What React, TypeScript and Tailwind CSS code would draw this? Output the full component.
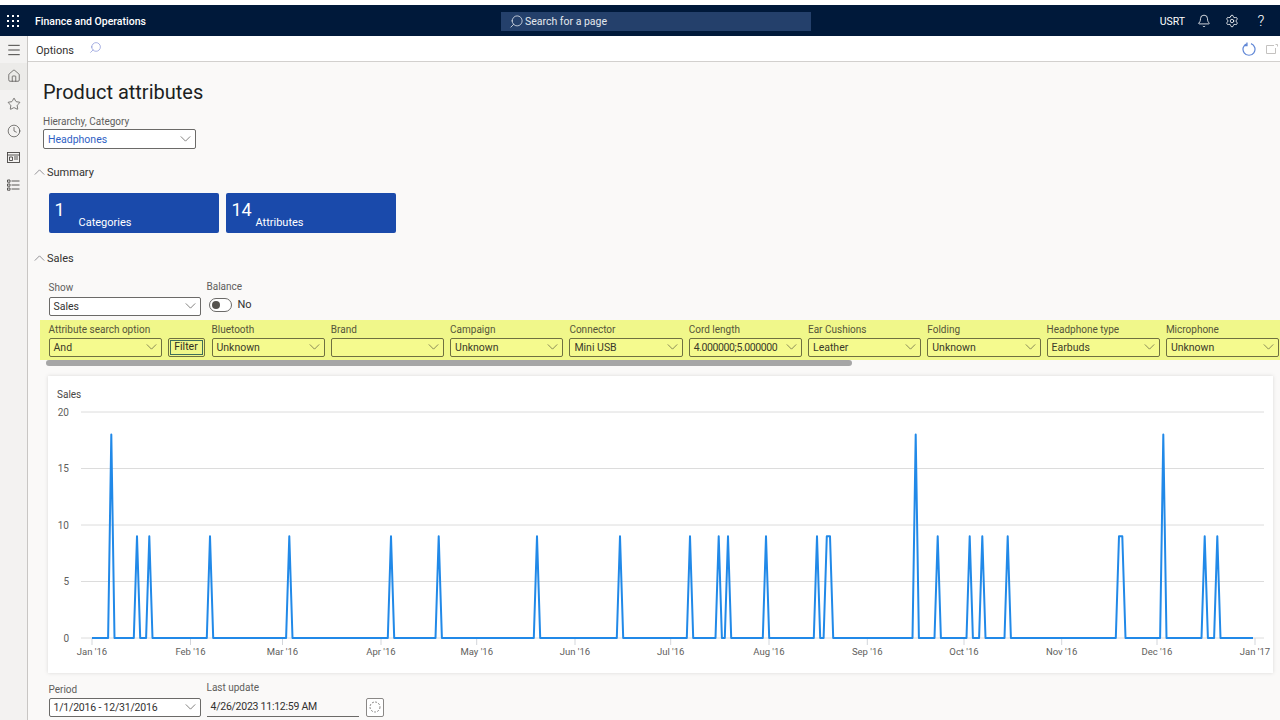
import { Bell, Clock, Home, Menu, Search, Settings, Star } from "lucide-react";

const peaks: [number, number, number][] = [
  [111.3, 111.3, 18], [137, 137, 9], [149.3, 149.3, 9], [210, 210, 9], [289.3, 289.3, 9],
  [391, 391, 9], [438.7, 438.7, 9], [537, 537, 9], [620, 620, 9], [690, 690, 9],
  [718.7, 718.7, 9], [728, 728, 9], [766, 766, 9], [817, 817, 9], [826.8, 830, 9],
  [915.7, 915.7, 18], [937.7, 937.7, 9], [969.7, 969.7, 9], [982.3, 982.3, 9],
  [1007.7, 1007.7, 9], [1119, 1122.3, 9], [1163.3, 1163.3, 18], [1204.7, 1204.7, 9], [1217.3, 1217.3, 9],
];

const months: [string, number][] = [
  ["Jan '16", 92], ["Feb '16", 190.5], ["Mar '16", 282.5], ["Apr '16", 381], ["May '16", 476.7],
  ["Jun '16", 575], ["Jul '16", 670.7], ["Aug '16", 769], ["Sep '16", 867.3], ["Oct '16", 964],
  ["Nov '16", 1061.7], ["Dec '16", 1157], ["Jan '17", 1255],
];

const filters: [string, string][] = [
  ["Bluetooth", "Unknown"], ["Brand", ""], ["Campaign", "Unknown"], ["Connector", "Mini USB"],
  ["Cord length", "4.000000;5.000000"], ["Ear Cushions", "Leather"], ["Folding", "Unknown"],
  ["Headphone type", "Earbuds"], ["Microphone", "Unknown"],
];

const yOf = (v: number) => 638 - v * 11.3;

const linePoints = () => {
  const pts: string[] = ["92,638"];
  peaks.forEach(([a, b, v]) => {
    pts.push(`${a - 3.2},638`, `${a},${yOf(v)}`);
    if (b !== a) pts.push(`${b},${yOf(v)}`);
    pts.push(`${b + 3.2},638`);
  });
  pts.push("1253,638");
  return pts.join(" ");
};

const Chevron = ({ up, className }: { up?: boolean; className: string }) => (
  <svg viewBox="0 0 12 7" className={`h-[6px] w-[11px] shrink-0 ${className}`} fill="none" stroke="currentColor" strokeWidth="0.9">
    <path d={up ? "M.5 6.5 6 1l5.5 5.5" : "M.5.5 6 6 11.5.5"} />
  </svg>
);

const SelectBox = ({ value, yellow, blue, tight, className }: { value: string; yellow?: boolean; blue?: boolean; tight?: string; className: string }) => {
  const surface = yellow ? "border-[#6f7040] bg-[#f5fa8e]" : "border-[#6b6a68] bg-white";
  const ink = blue ? "text-[#2f5fc4]" : yellow ? "text-[#3b3a2a]" : "text-[#323130]";
  return (
    <div className={`flex h-[19.5px] items-center justify-between rounded-[2px] border pl-[4px] pr-[4px] text-[10.5px] leading-none ${surface} ${ink} ${className}`}>
      <span className={`mt-[2px] whitespace-nowrap ${tight ?? ""}`}>{value}</span>
      <Chevron className={yellow ? "text-[#6a6b48]" : "text-[#605e5c]"} />
    </div>
  );
};

const Section = ({ title, className }: { title: string; className: string }) => (
  <div className={`flex h-[14px] items-center text-[11px] text-[#323130] ${className}`}>
    <Chevron up className="ml-[6px] mr-[2px] -mt-[1px] text-[#77757a]" />
    <span className="mt-[2px]">{title}</span>
  </div>
);

const Tile = ({ count, label }: { count: string; label: string }) => (
  <div className="flex h-[40px] w-[170.5px] rounded-[2px] bg-[#1a4aab] pl-[6px] text-white">
    <span className="mt-[5px] w-[24px] text-[18px] leading-[24px]">{count}</span>
    <span className="mt-[23px] text-[11px] leading-[14px]">{label}</span>
  </div>
);

const NavButton = ({ children, active }: { children: React.ReactNode; active?: boolean }) => (
  <div className={`flex h-[27px] items-center justify-center text-[#484644] ${active ? "bg-[#ecebe9]" : ""}`}>{children}</div>
);

const SalesChart = () => (
  <svg viewBox="48 376 1225 297" className="h-[297px] w-[1225px]">
    <text x="57" y="398" fontSize="10" fill="#484644">Sales</text>
    {[0, 5, 10, 15, 20].map((v) => (
      <g key={v}>
        <line x1="81" x2="1264" y1={yOf(v)} y2={yOf(v)} stroke="#dcdcdc" strokeWidth="1" />
        <text x="69" y={yOf(v) + 3.5} fontSize="10" fill="#605e5c" textAnchor="end">{v}</text>
      </g>
    ))}
    {months.map(([label, x]) => (
      <g key={label}>
        <line x1={x} x2={x} y1="638" y2="645" stroke="#d3d6db" />
        <text x={x} y="655" fontSize="9.5" fill="#605e5c" textAnchor="middle">{label}</text>
      </g>
    ))}
    <polyline points={linePoints()} fill="none" stroke="#2189e8" strokeWidth="2" strokeLinejoin="round" />
  </svg>
);

export default function App() {
  return (
    <div className="flex h-[720px] w-[1280px] flex-col overflow-hidden bg-[#faf9f8] font-['Roboto',sans-serif]">
      <div className="h-[5px] shrink-0 bg-white" />

      {/* Top bar */}
      <header className="flex h-[31px] shrink-0 items-center bg-[#00193a] text-white">
        <svg viewBox="0 0 12 12" className="ml-[7px] h-[12px] w-[12px]" fill="#fff">
          {[1, 6, 11].map((y) => [1, 6, 11].map((x) => <rect key={`${x}${y}`} x={x - 1} y={y - 1} width="2" height="2" />))}
        </svg>
        <span className="ml-[16px] mt-[3px] w-[112px] whitespace-nowrap text-[10.5px] font-medium">Finance and Operations</span>
        <div className="ml-[354px] mt-[1px] flex h-[19px] w-[310px] items-center bg-[#24406b] pl-[8px] text-[10.5px] text-[#e4e8ee]">
          <Search className="mr-[1px] h-[15px] w-[15px] -scale-x-100" strokeWidth={1.25} />
          <span className="mt-[2px]">Search for a page</span>
        </div>
        <span className="ml-auto mr-[1px] mt-[3px] text-[10.5px]">USRT</span>
        <span className="ml-[4px] flex w-[28px] justify-center"><Bell className="h-[14px] w-[14px]" strokeWidth={1.4} /></span>
        <span className="flex w-[28px] justify-center"><Settings className="h-[14px] w-[14px]" strokeWidth={1.4} /></span>
        <span className="mr-[4px] mt-[2px] w-[30px] text-center text-[15px] font-light leading-none">?</span>
      </header>

      <div className="flex min-h-0 flex-1">
        {/* Side nav */}
        <nav className="w-[28px] shrink-0 border-r border-[#c8c6c4] bg-[#f3f2f1]">
          <NavButton><Menu className="mt-[1px] h-[16px] w-[16px]" strokeWidth={1.5} /></NavButton>
          <NavButton active><Home className="-mt-[1px] h-[14px] w-[14px]" strokeWidth={1.2} /></NavButton>
          <NavButton><Star className="h-[14px] w-[14px]" strokeWidth={1.2} /></NavButton>
          <NavButton><Clock className="h-[14px] w-[14px]" strokeWidth={1.2} /></NavButton>
          <NavButton>
            <svg viewBox="0 0 13 11" className="h-[11px] w-[13px]" fill="none" stroke="currentColor" strokeWidth="0.9">
              <rect x="0.5" y="0.5" width="12" height="10" />
              <path d="M0.5 3h12M2.5 5h3v3.5h-3zM7 5h4M7 7h4" />
            </svg>
          </NavButton>
          <NavButton>
            <svg viewBox="0 0 13 12" className="h-[12px] w-[13px]" fill="none" stroke="currentColor" strokeWidth="0.9">
              <path d="M0.5 1h2.5v2.2H0.5zM0.5 5h2.5v2.2H0.5zM0.5 9h2.5v2.2H0.5zM4.5 2h8M4.5 6h8M4.5 10h8" />
            </svg>
          </NavButton>
        </nav>

        <main className="min-w-0 flex-1">
          {/* Command bar */}
          <div className="flex h-[26px] items-center border-b border-[#d2d0ce] bg-white pl-[8px] text-[#323130]">
            <span className="mt-[6px] text-[11px]">Options</span>
            <Search className="ml-[15px] -mt-[2px] h-[13px] w-[13px] -scale-x-100 text-[#6f7fd0]" strokeWidth={1.1} />
            <svg viewBox="0 0 14 14" className="ml-auto h-[14px] w-[14px]" fill="none" stroke="#5f86d6" strokeWidth="1.2">
              <path d="M5 1.6a6 6 0 1 0 4 0M5 .6v3h-3" />
            </svg>
            <svg viewBox="0 0 12 10" className="ml-[10px] mr-[2px] h-[10px] w-[12px]" fill="none" stroke="#c4c2c0" strokeWidth="1">
              <path d="M8 1.5H.5v8h9V4M9.5.5h2v2" />
            </svg>
          </div>

          <h1 className="ml-[15px] mt-[16px] text-[20px] font-normal leading-[28px] text-[#201f1e]">Product attributes</h1>
          <div className="ml-[15px] mt-[9px] text-[10px] leading-[14px] text-[#605e5c]">Hierarchy, Category</div>
          <SelectBox value="Headphones" blue className="ml-[15px] w-[153px]" />

          <Section title="Summary" className="mt-[17px]" />
          <div className="ml-[20.5px] mt-[13px] flex gap-[6.5px]">
            <Tile count="1" label="Categories" />
            <Tile count="14" label="Attributes" />
          </div>

          <Section title="Sales" className="mt-[19px]" />

          {/* Show + balance */}
          <div className="ml-[20.5px] mt-[14px] flex h-[37px]">
            <div className="w-[152px]">
              <div className="h-[17px] text-[10px] leading-[16px] text-[#605e5c]">Show</div>
              <SelectBox value="Sales" className="w-[152px]" />
            </div>
            <div className="ml-[6px] -mt-[1px]">
              <div className="h-[17px] text-[10px] leading-[16px] text-[#605e5c]">Balance</div>
              <div className="ml-[2px] mt-[1px] flex items-center">
                <div className="flex h-[14px] w-[23px] items-center rounded-full border border-[#6b6a68] bg-white pl-[2px]">
                  <div className="h-[8px] w-[8px] rounded-full bg-[#55534f]" />
                </div>
                <span className="ml-[6px] text-[11px] text-[#323130]">No</span>
              </div>
            </div>
          </div>

          {/* Filter band */}
          <div className="ml-[12px] mt-[3px] flex h-[40px] gap-[6px] bg-[#f0f78a] pl-[8.5px] pt-[2px]">
            <div className="w-[113.3px] shrink-0">
              <div className="h-[16px] whitespace-nowrap text-[10px] leading-[16px] text-[#55553a]">Attribute search option</div>
              <SelectBox value="And" yellow className="w-[113.3px]" />
            </div>
            <div className="ml-[-0.3px] mr-[1px] mt-[16px] flex h-[19.5px] w-[37px] shrink-0 items-center justify-center rounded-[2px] border border-[#6f7040] p-[1px]">
              <div className="flex h-full w-full items-center justify-center border border-[#3f6f5a] text-[10.5px] text-[#2f2f20]">Filter</div>
            </div>
            {filters.map(([label, value]) => (
              <div key={label} className="w-[113.3px] shrink-0">
                <div className="h-[16px] whitespace-nowrap text-[10px] leading-[16px] text-[#55553a]">{label}</div>
                <SelectBox value={value} yellow tight={label === "Cord length" ? "tracking-[-0.4px]" : ""} className="w-[113.3px]" />
              </div>
            ))}
          </div>

          {/* Scroll thumb */}
          <div className="ml-[18px] h-[6px] w-[806px] rounded-full bg-[#a6a6a6]" />

          <div className="ml-[20px] mt-[10px] w-[1225px] bg-white shadow-[0_0_4px_rgba(0,0,0,0.13)]">
            <SalesChart />
          </div>

          {/* Period row */}
          <div className="ml-[20.5px] mt-[7px] flex">
            <div className="w-[152px] pt-[2px]">
              <div className="h-[16px] text-[10px] leading-[16px] text-[#605e5c]">Period</div>
              <SelectBox value="1/1/2016 - 12/31/2016" tight="tracking-[-0.2px]" className="w-[152px]" />
            </div>
            <div className="ml-[6px] w-[152px]">
              <div className="h-[18px] text-[10px] leading-[16px] text-[#605e5c]">Last update</div>
              <div className="flex h-[19.5px] items-center border-b border-[#6b6a68] pl-[4px] text-[10.5px] tracking-[-0.25px] text-[#323130]">4/26/2023 11:12:59 AM</div>
            </div>
            <div className="ml-[7px] mt-[18px] flex h-[19.5px] w-[18px] items-center justify-center rounded-[2px] border border-[#8a8886] bg-white">
              <svg viewBox="0 0 12 12" className="h-[12px] w-[12px]" fill="none" stroke="#8a8886" strokeWidth="1" strokeDasharray="2 1.3">
                <circle cx="6" cy="6" r="5" />
              </svg>
            </div>
          </div>
        </main>
      </div>
    </div>
  );
}
